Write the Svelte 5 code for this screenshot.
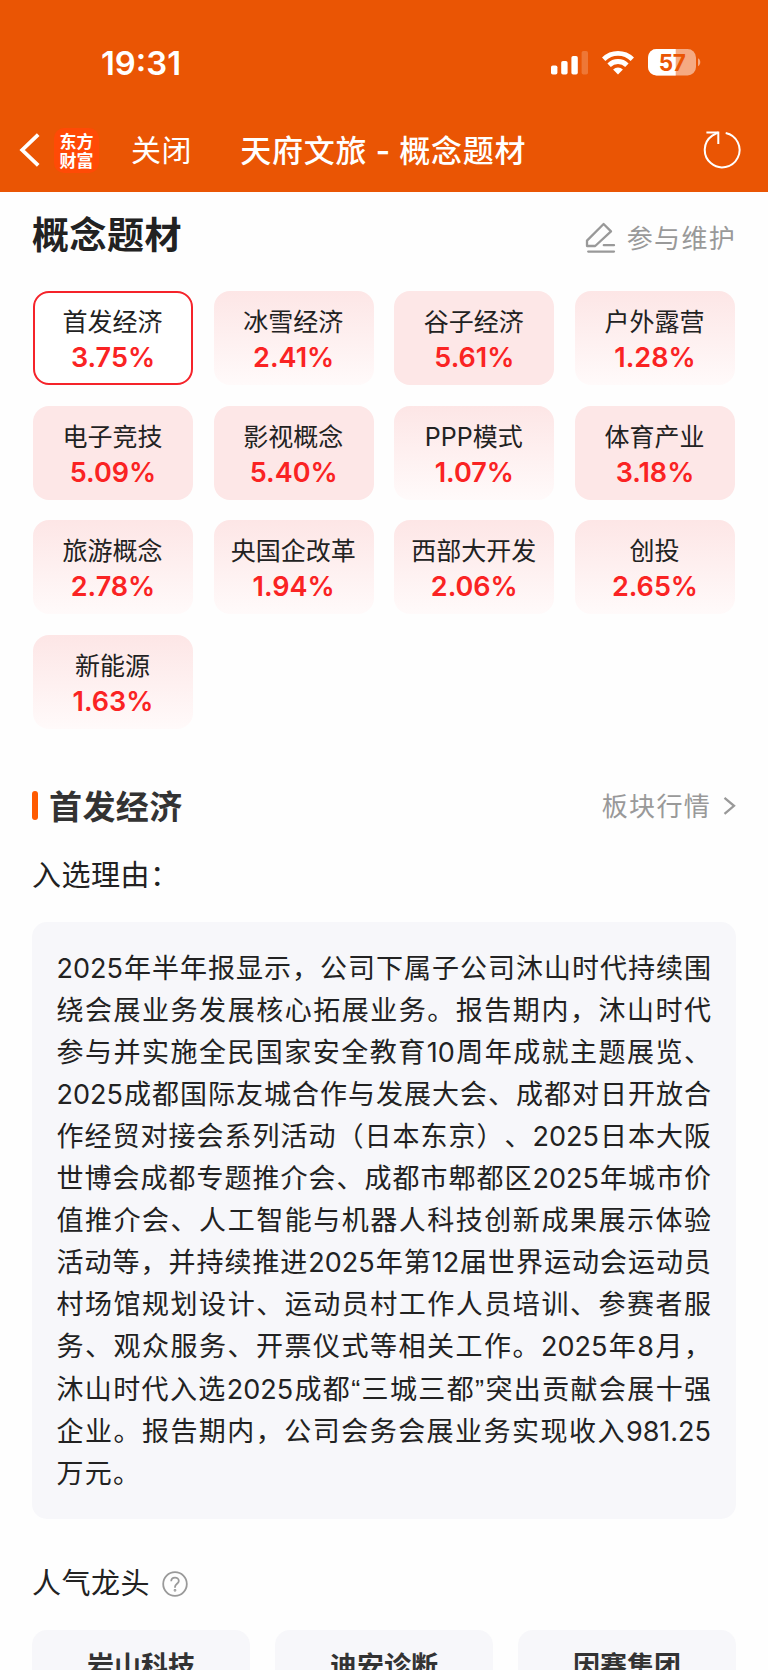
<script>
  const concepts = [
    { name: '首发经济', pct: '3.75%', kind: 'active' },
    { name: '冰雪经济', pct: '2.41%', kind: 'fade' },
    { name: '谷子经济', pct: '5.61%', kind: 'solid' },
    { name: '户外露营', pct: '1.28%', kind: 'fade' },
    { name: '电子竞技', pct: '5.09%', kind: 'solid' },
    { name: '影视概念', pct: '5.40%', kind: 'solid' },
    { name: 'PPP模式', pct: '1.07%', kind: 'fade' },
    { name: '体育产业', pct: '3.18%', kind: 'solid' },
    { name: '旅游概念', pct: '2.78%', kind: 'fade' },
    { name: '央国企改革', pct: '1.94%', kind: 'fade' },
    { name: '西部大开发', pct: '2.06%', kind: 'fade' },
    { name: '创投', pct: '2.65%', kind: 'fade' },
    { name: '新能源', pct: '1.63%', kind: 'fade' }
  ];
  const lines = [
    '2025年半年报显示，公司下属子公司沐山时代持续围',
    '绕会展业务发展核心拓展业务。报告期内，沐山时代',
    '参与并实施全民国家安全教育10周年成就主题展览、',
    '2025成都国际友城合作与发展大会、成都对日开放合',
    '作经贸对接会系列活动（日本东京）、2025日本大阪',
    '世博会成都专题推介会、成都市郫都区2025年城市价',
    '值推介会、人工智能与机器人科技创新成果展示体验',
    '活动等，并持续推进2025年第12届世界运动会运动员',
    '村场馆规划设计、运动员村工作人员培训、参赛者服',
    '务、观众服务、开票仪式等相关工作。2025年8月，',
    '沐山时代入选2025成都“三城三都”突出贡献会展十强',
    '企业。报告期内，公司会务会展业务实现收入981.25',
    '万元。'
  ];
  const leaders = ['岩山科技', '迪安诊断', '因赛集团'];
</script>

<div class="page">
  <header>
    <div class="status">
      <span class="time">19:31</span>
      <div class="indicators">
        <svg width="38" height="26" viewBox="0 0 38 26" fill="#fff">
          <rect x="0" y="15.5" width="6.4" height="9" rx="1.8" />
          <rect x="10.2" y="11" width="6.4" height="13.5" rx="1.8" />
          <rect x="20.4" y="6" width="6.4" height="18.5" rx="1.8" />
          <rect x="30.6" y="1" width="6.4" height="23.5" rx="1.8" opacity=".2" />
        </svg>
        <svg class="wifi" width="32" height="26" viewBox="0 0 32 26" fill="none" stroke="#fff" stroke-width="4.8">
          <path d="M1.7 9.2a20.5 20.5 0 0 1 28.6 0" />
          <path d="M7.1 15.2a12.6 12.6 0 0 1 17.8 0" />
          <path d="M16 24.6l-4.9-5a7 7 0 0 1 9.8 0z" fill="#fff" stroke="none" />
        </svg>
        <svg class="battery" width="53" height="27" viewBox="0 0 53 27">
          <clipPath id="cell"><rect width="48" height="26.5" rx="8.5" /></clipPath>
          <g clip-path="url(#cell)">
            <rect width="48" height="27" fill="#fff" opacity=".5" />
            <rect width="27.7" height="27" fill="#fff" />
          </g>
          <path d="M50 9.3c3 1.3 3 6.6 0 7.9z" fill="#fff" opacity=".5" />
          <text x="24.2" y="21.8" text-anchor="middle">57</text>
        </svg>
      </div>
    </div>
    <nav>
      <svg class="back" width="22" height="36" viewBox="0 0 22 36" fill="none" stroke="#fff" stroke-width="3.8">
        <path d="M20.2 2.6L4.2 18l16 15.4" />
      </svg>
      <div class="logo">东方<br />财富</div>
      <span class="close">关闭</span>
      <h1>天府文旅 <i>-</i> 概念题材</h1>
      <svg class="reload" width="40" height="40" viewBox="0 0 40 40" fill="none" stroke="#fff" stroke-width="2">
        <path d="M23.7 2.9A17.4 17.4 0 1 1 10.3 5.6L16.2 2.4" />
        <path d="M4.4 2.4H16.3V14" />
      </svg>
    </nav>
  </header>

  <main>
    <div class="heading">
      <h2>概念题材</h2>
      <div class="maintain">
        <svg width="32" height="32" viewBox="0 0 32 32" fill="none" stroke="#999" stroke-width="2.3" stroke-linejoin="round" stroke-linecap="round">
          <path d="M2 18.6L18.6 2L26 9.4L10.2 24H2z" />
          <path d="M18.8 23.2H29M3.2 29.6H29" />
        </svg>
        <span>参与维护</span>
      </div>
    </div>

    <div class="chips">
      {#each concepts as c}
        <div class="chip {c.kind}">
          <span class="name">{c.name}</span>
          <span class="pct">{c.pct}</span>
        </div>
      {/each}
    </div>

    <div class="section">
      <i class="bar"></i>
      <h3>首发经济</h3>
      <span class="more">板块行情</span>
      <svg width="14" height="20" viewBox="0 0 14 20" fill="none" stroke="#999" stroke-width="2.3">
        <path d="M2.5 1.8L12 9.8L2.5 17.8" />
      </svg>
    </div>

    <div class="label reason">入选理由：</div>
    <div class="box">
      {#each lines as line}
        <span class="line">{#each line.split(/([“”])/) as part}{#if part === '“' || part === '”'}<span class="quote">{part}</span>{:else}{part}{/if}{/each}</span>
      {/each}
    </div>

    <div class="label popular">
      <span>人气龙头</span>
      <svg width="26" height="26" viewBox="0 0 26 26" fill="none" stroke="#999" stroke-width="1.8">
        <circle cx="13" cy="13" r="11.8" />
        <path d="M9.2 10.3c0-5 7.6-4.8 7.6-.4c0 2.8-3.8 3-3.8 6.1v.8" />
        <circle cx="13" cy="19.3" r=".5" />
      </svg>
    </div>
    <div class="leaders">
      {#each leaders as l}
        <div class="leader">{l}</div>
      {/each}
    </div>
  </main>
</div>

<style>
  :global(body) {
    background: #fefefe;
  }
  .page {
    width: 768px;
    height: 1670px;
    overflow: hidden;
    background: #fefefe;
    color: #222;
    font-family: Inter, 'Noto Sans CJK SC', sans-serif;
    text-spacing-trim: space-all;
  }
  h1, h2, h3 {
    margin: 0;
  }
  svg {
    flex: none;
    display: block;
  }
  header {
    height: 192px;
    background: #ea5504;
    color: #fff;
  }
  .status {
    height: 108px;
    display: flex;
    justify-content: space-between;
    align-items: flex-start;
    padding: 43px 67px 0 101px;
    box-sizing: border-box;
  }
  .time {
    font-size: 32.8px;
    font-weight: 600;
    line-height: 40px;
  }
  .indicators {
    display: flex;
    align-items: center;
    padding-top: 6px;
  }
  .wifi {
    margin-left: 13px;
  }
  .battery {
    margin-left: 14px;
  }
  .battery text {
    font: 700 22.5px Inter, sans-serif;
    fill: #ea5504;
    letter-spacing: -0.3px;
  }
  nav {
    height: 84px;
    display: flex;
    align-items: center;
    padding: 0 26px 0 18px;
  }
  .logo {
    width: 45px;
    height: 45px;
    margin-left: 14px;
    border-radius: 10px;
    background: #ff4a06;
    box-sizing: border-box;
    padding-top: 3px;
    text-align: center;
    font: 700 17px/19px 'Noto Sans CJK SC', sans-serif;
  }
  .close {
    margin: -4px 0 0 32px;
    font-size: 30px;
    letter-spacing: 0.6px;
    font-weight: 400;
  }
  h1 {
    margin: -4px 0 0 48px;
    font-size: 31px;
    font-weight: 600;
    letter-spacing: 0.8px;
    white-space: pre;
  }
  h1 {
    font-weight: 500;
  }
  h1 i {
    font-style: normal;
    font-weight: 600;
    margin: 0 -0.8px;
  }
  .reload {
    margin-left: auto;
  }
  main {
    padding: 0 32px;
  }
  .heading {
    height: 99px;
    display: flex;
    justify-content: space-between;
  }
  h2 {
    font-size: 37px;
    line-height: 50px;
    margin-top: 19px;
    font-weight: 700;
    letter-spacing: 0.5px;
  }
  .maintain {
    display: flex;
    height: 32px;
    margin-top: 30px;
    align-items: center;
    gap: 10px;
    color: #999;
    font-size: 26px;
    letter-spacing: 1.3px;
  }
  .maintain svg {
    margin-left: -1px;
  }
  .maintain span {
    margin-top: -3px;
  }
  .chips {
    display: grid;
    grid-template-columns: repeat(4, 160px);
    justify-content: space-between;
    row-gap: 20.6px;
    padding: 0 1px;
  }
  .chip {
    height: 94px;
    box-sizing: border-box;
    border-radius: 16px;
    display: flex;
    flex-direction: column;
    align-items: center;
    padding-top: 14px;
  }
  .solid {
    background: #fde7e7;
  }
  .fade {
    background: linear-gradient(#fde6e6, #fffafa);
  }
  .active {
    border: 2px solid #f5232a;
    padding-top: 12px;
    background: #fff;
  }
  .name {
    font-size: 25px;
    line-height: 34px;
    margin-right: 1px;
  }
  .pct {
    font-size: 27px;
    line-height: 38px;
    font-weight: 600;
    color: #fa2323;
  }
  .section {
    display: flex;
    align-items: center;
    height: 60px;
    margin-top: 47px;
  }
  .bar {
    width: 6px;
    height: 29px;
    border-radius: 3px;
    background: #ff5a00;
  }
  h3 {
    margin: -2px 0 0 11px;
    flex: 1;
    font-size: 33px;
    font-weight: 700;
    color: #333;
    letter-spacing: 0.4px;
  }
  .more {
    font-size: 26px;
    color: #999;
    letter-spacing: 1.3px;
    margin: -3px 11px 0 0;
  }
  .label {
    font-size: 29px;
    letter-spacing: 0.5px;
    line-height: 40px;
  }
  .reason {
    margin-top: 20px;
  }
  .box {
    margin-top: 26px;
    height: 597px;
    box-sizing: border-box;
    padding: 26px 25px 0 24.5px;
    border-radius: 15px;
    background: #f7f7fa;
    font-size: 27px;
  }
  .line {
    display: block;
    height: 42.08px;
    line-height: 42.08px;
    white-space: nowrap;
    text-align: justify;
    text-align-last: justify;
  }
  .line:last-child {
    text-align-last: left;
    letter-spacing: 1.2px;
  }
  .quote {
    font-family: 'Liberation Sans', sans-serif;
  }
  .popular {
    margin-top: 45px;
    display: flex;
    align-items: center;
    gap: 12px;
  }
  .leaders {
    display: grid;
    grid-template-columns: repeat(3, 218px);
    justify-content: space-between;
    margin-top: 26px;
  }
  .leader {
    height: 120px;
    border-radius: 15px;
    background: #f7f7fa;
    text-align: center;
    font-size: 27px;
    line-height: 36px;
    font-weight: 600;
    color: #333;
    padding-top: 19px;
  }
</style>
